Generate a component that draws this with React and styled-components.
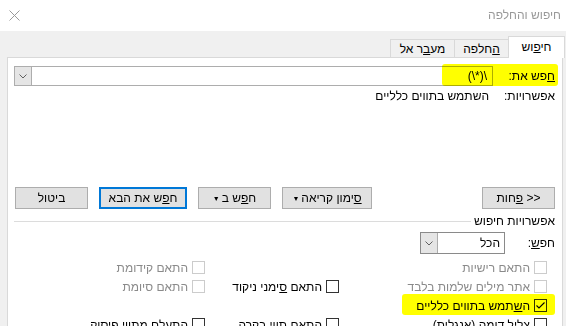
import React from 'react';
import styled, { createGlobalStyle, css } from 'styled-components';

const Global = createGlobalStyle`
  html, body { margin: 0; padding: 0; background: #f0f0f0; }
  body {
    width: 566px; height: 326px; overflow: hidden;
    font-family: "Liberation Sans", "DejaVu Sans", sans-serif;
  }
`;

const Window = styled.div`
  position: relative;
  width: 566px;
  height: 326px;
  overflow: hidden;
  background: #f0f0f0;
  direction: rtl;
  font-size: 12px;
  color: #000;
  display: flex;
  flex-direction: column;
`;

const TitleBar = styled.div`
  height: 31px;
  flex: none;
  background: #fff;
  display: flex;
  align-items: center;
  justify-content: space-between;
  padding: 0 5px 0 9px;
  box-sizing: border-box;
`;

const Title = styled.div`
  color: #999;
  font-size: 12px;
  padding-bottom: 1px;
`;

const CloseIcon = () => (
  <svg width="11" height="11" viewBox="0 0 11 11">
    <path d="M0.5 0.5 L10.5 10.5 M10.5 0.5 L0.5 10.5" stroke="#9a9a9a" strokeWidth="1" />
  </svg>
);

const Body = styled.div`
  flex: 1;
  display: flex;
  flex-direction: column;
  padding: 6px 1px 0 7px;
  min-height: 0;
`;

const TabStrip = styled.div`
  display: flex;
  align-items: flex-end;
  height: 21px;
  flex: none;
  position: relative;
  z-index: 1;
  margin-bottom: -1px;
`;

const Tab = styled.div`
  box-sizing: border-box;
  width: ${p => p.$w}px;
  display: flex;
  align-items: center;
  justify-content: center;
  border-top: 1px solid #d9d9d9;
  border-left: 1px solid #d9d9d9;
  white-space: nowrap;
  ${p => p.$active ? css`
    height: 22px;
    background: #fff;
    border-right: 1px solid #d9d9d9;
    padding-bottom: 2px;
  ` : css`
    height: 19px;
    background: #f0f0f0;
    border-bottom: 1px solid #d9d9d9;
  `}
`;

const Panel = styled.div`
  flex: 1;
  background: #fff;
  border: 1px solid #d9d9d9;
  border-bottom: none;
  margin-right: 2px;
  padding: 8px 7px 0 6px;
  display: flex;
  flex-direction: column;
`;

const FieldRow = styled.div`
  display: flex;
  align-items: center;
  height: ${p => p.$h || 20}px;
  margin-top: ${p => p.$mt || 0}px;
`;

const Label = styled.div`
  width: ${p => p.$w}px;
  flex: none;
  white-space: nowrap;
`;

const Combo = styled.div`
  box-sizing: border-box;
  display: flex;
  align-items: stretch;
  height: ${p => p.$h || 20}px;
  width: ${p => (p.$w ? `${p.$w}px` : 'auto')};
  flex: ${p => (p.$w ? 'none' : '1')};
  border: 1px solid ${p => p.$border || '#adadad'};
  background: #fff;
`;

const ComboText = styled.div`
  flex: 1;
  display: flex;
  align-items: center;
  padding-right: ${p => p.$pr || 5}px;
  white-space: nowrap;
`;

const ComboButton = styled.div`
  width: 16px;
  flex: none;
  background: #e5e5e5;
  border-right: 1px solid #adadad;
  display: flex;
  align-items: center;
  justify-content: center;
`;

const Chevron = () => (
  <svg width="8" height="5" viewBox="0 0 8 5">
    <path d="M0.5 0.5 L4 4 L7.5 0.5" stroke="#606060" strokeWidth="1" fill="none" />
  </svg>
);

const ButtonsRow = styled.div`
  display: flex;
  justify-content: space-between;
  margin-top: 83px;
  padding-left: 1px;
`;

const ButtonGroup = styled.div`
  display: flex;
  gap: 11px;
`;

const Button = styled.div`
  box-sizing: border-box;
  width: ${p => p.$w}px;
  height: 22px;
  background: #e1e1e1;
  border: ${p => (p.$default ? '2px solid #0078d7' : '1px solid #adadad')};
  display: flex;
  align-items: center;
  justify-content: center;
  gap: 2px;
  white-space: nowrap;
`;

const Caret = styled.span`
  font-size: 7px;
  line-height: 1;
`;

const GroupHeader = styled.div`
  display: flex;
  align-items: center;
  margin-top: 5px;
  height: 14px;
`;

const GroupLine = styled.div`
  flex: 1;
  border-top: 1px solid #dcdcdc;
  margin-right: 3px;
`;

const CheckGrid = styled.div`
  display: grid;
  grid-template-columns: 208px 134px 1fr;
  grid-auto-rows: 19px;
  padding-right: 8px;
  margin-top: 4px;
`;

const CheckItem = styled.div`
  display: flex;
  align-items: center;
  gap: 4px;
  white-space: nowrap;
  color: ${p => (p.$disabled ? '#8a8a8a' : '#000')};
`;

const Box = styled.div`
  box-sizing: border-box;
  width: 13px;
  height: 13px;
  flex: none;
  border: 1px solid ${p => (p.$disabled ? '#cccccc' : '#333')};
  background: #fff;
  display: flex;
  align-items: center;
  justify-content: center;
`;

const Highlight = styled.div`
  position: absolute;
  background: #ffff00;
  mix-blend-mode: multiply;
  border-radius: 3px;
  pointer-events: none;
`;

const Check = ({ label, disabled, checked }) => (
  <CheckItem $disabled={disabled}>
    <Box $disabled={disabled}>
      {checked && (
        <svg width="11" height="11" viewBox="0 0 11 11">
          <path d="M1.5 5.5 L4 8 L9.5 2.5" stroke="#000" strokeWidth="1.1" fill="none" />
        </svg>
      )}
    </Box>
    <span>{label}</span>
  </CheckItem>
);

const Empty = styled.div``;

export default function App() {
  return (
    <>
      <Global />
      <Window>
        <TitleBar>
          <Title>חיפוש והחלפה</Title>
          <CloseIcon />
        </TitleBar>
        <Body>
          <TabStrip>
            <Tab $active $w={57}><span>חי<u>פ</u>וש</span></Tab>
            <Tab $w={54}><span><u>ה</u>חלפה</span></Tab>
            <Tab $w={64}><span>מע<u>ב</u>ר אל</span></Tab>
          </TabStrip>
          <Panel>
            <FieldRow>
              <Label $w={62}><u>ח</u>פש את:</Label>
              <Combo>
                <ComboText $pr={5}>\(*\)</ComboText>
                <ComboButton><Chevron /></ComboButton>
              </Combo>
            </FieldRow>
            <FieldRow $h={16} $mt={2}>
              <Label $w={66}>אפשרויות:</Label>
              <span>השתמש בתווים כלליים</span>
            </FieldRow>
            <ButtonsRow>
              <Button $w={73}><span>&lt;&lt; <u>פ</u>חות</span></Button>
              <ButtonGroup>
                <Button $w={90}><span><u>ס</u>ימון קריאה</span><Caret>▼</Caret></Button>
                <Button $w={73}><span>ח<u>פ</u>ש ב</span><Caret>▼</Caret></Button>
                <Button $w={88} $default><span>ח<u>פ</u>ש את הבא</span></Button>
                <Button $w={73}><span>ביטול</span></Button>
              </ButtonGroup>
            </ButtonsRow>
            <GroupHeader>
              <span>אפשרויות חיפוש</span>
              <GroupLine />
            </GroupHeader>
            <FieldRow $h={22} $mt={4}>
              <Label $w={50}>חפ<u>ש</u>:</Label>
              <Combo $w={85} $h={22} $border="#8a8a8a">
                <ComboText $pr={4}>הכל</ComboText>
                <ComboButton><Chevron /></ComboButton>
              </Combo>
            </FieldRow>
            <CheckGrid>
              <Check label="התאם רישיות" disabled />
              <Empty />
              <Check label="התאם קידומת" disabled />

              <Check label="אתר מילים שלמות בלבד" disabled />
              <Check label={<>התאם <u>ס</u>ימני ניקוד</>} />
              <Check label="התאם סיומת" disabled />

              <Check label={<>ה<u>ש</u>תמש בתווים כלליים</>} checked />
              <Empty />
              <Empty />

              <Check label="צליל דומה (אנגלית)" />
              <Check label="התאם תווי בקרה" />
              <Check label="התעלם מתווי פיסוק" />
            </CheckGrid>
          </Panel>
        </Body>
        <Highlight style={{ left: 442, top: 64, width: 116, height: 22 }} />
        <Highlight style={{ left: 402, top: 294, width: 153, height: 21 }} />
      </Window>
    </>
  );
}
